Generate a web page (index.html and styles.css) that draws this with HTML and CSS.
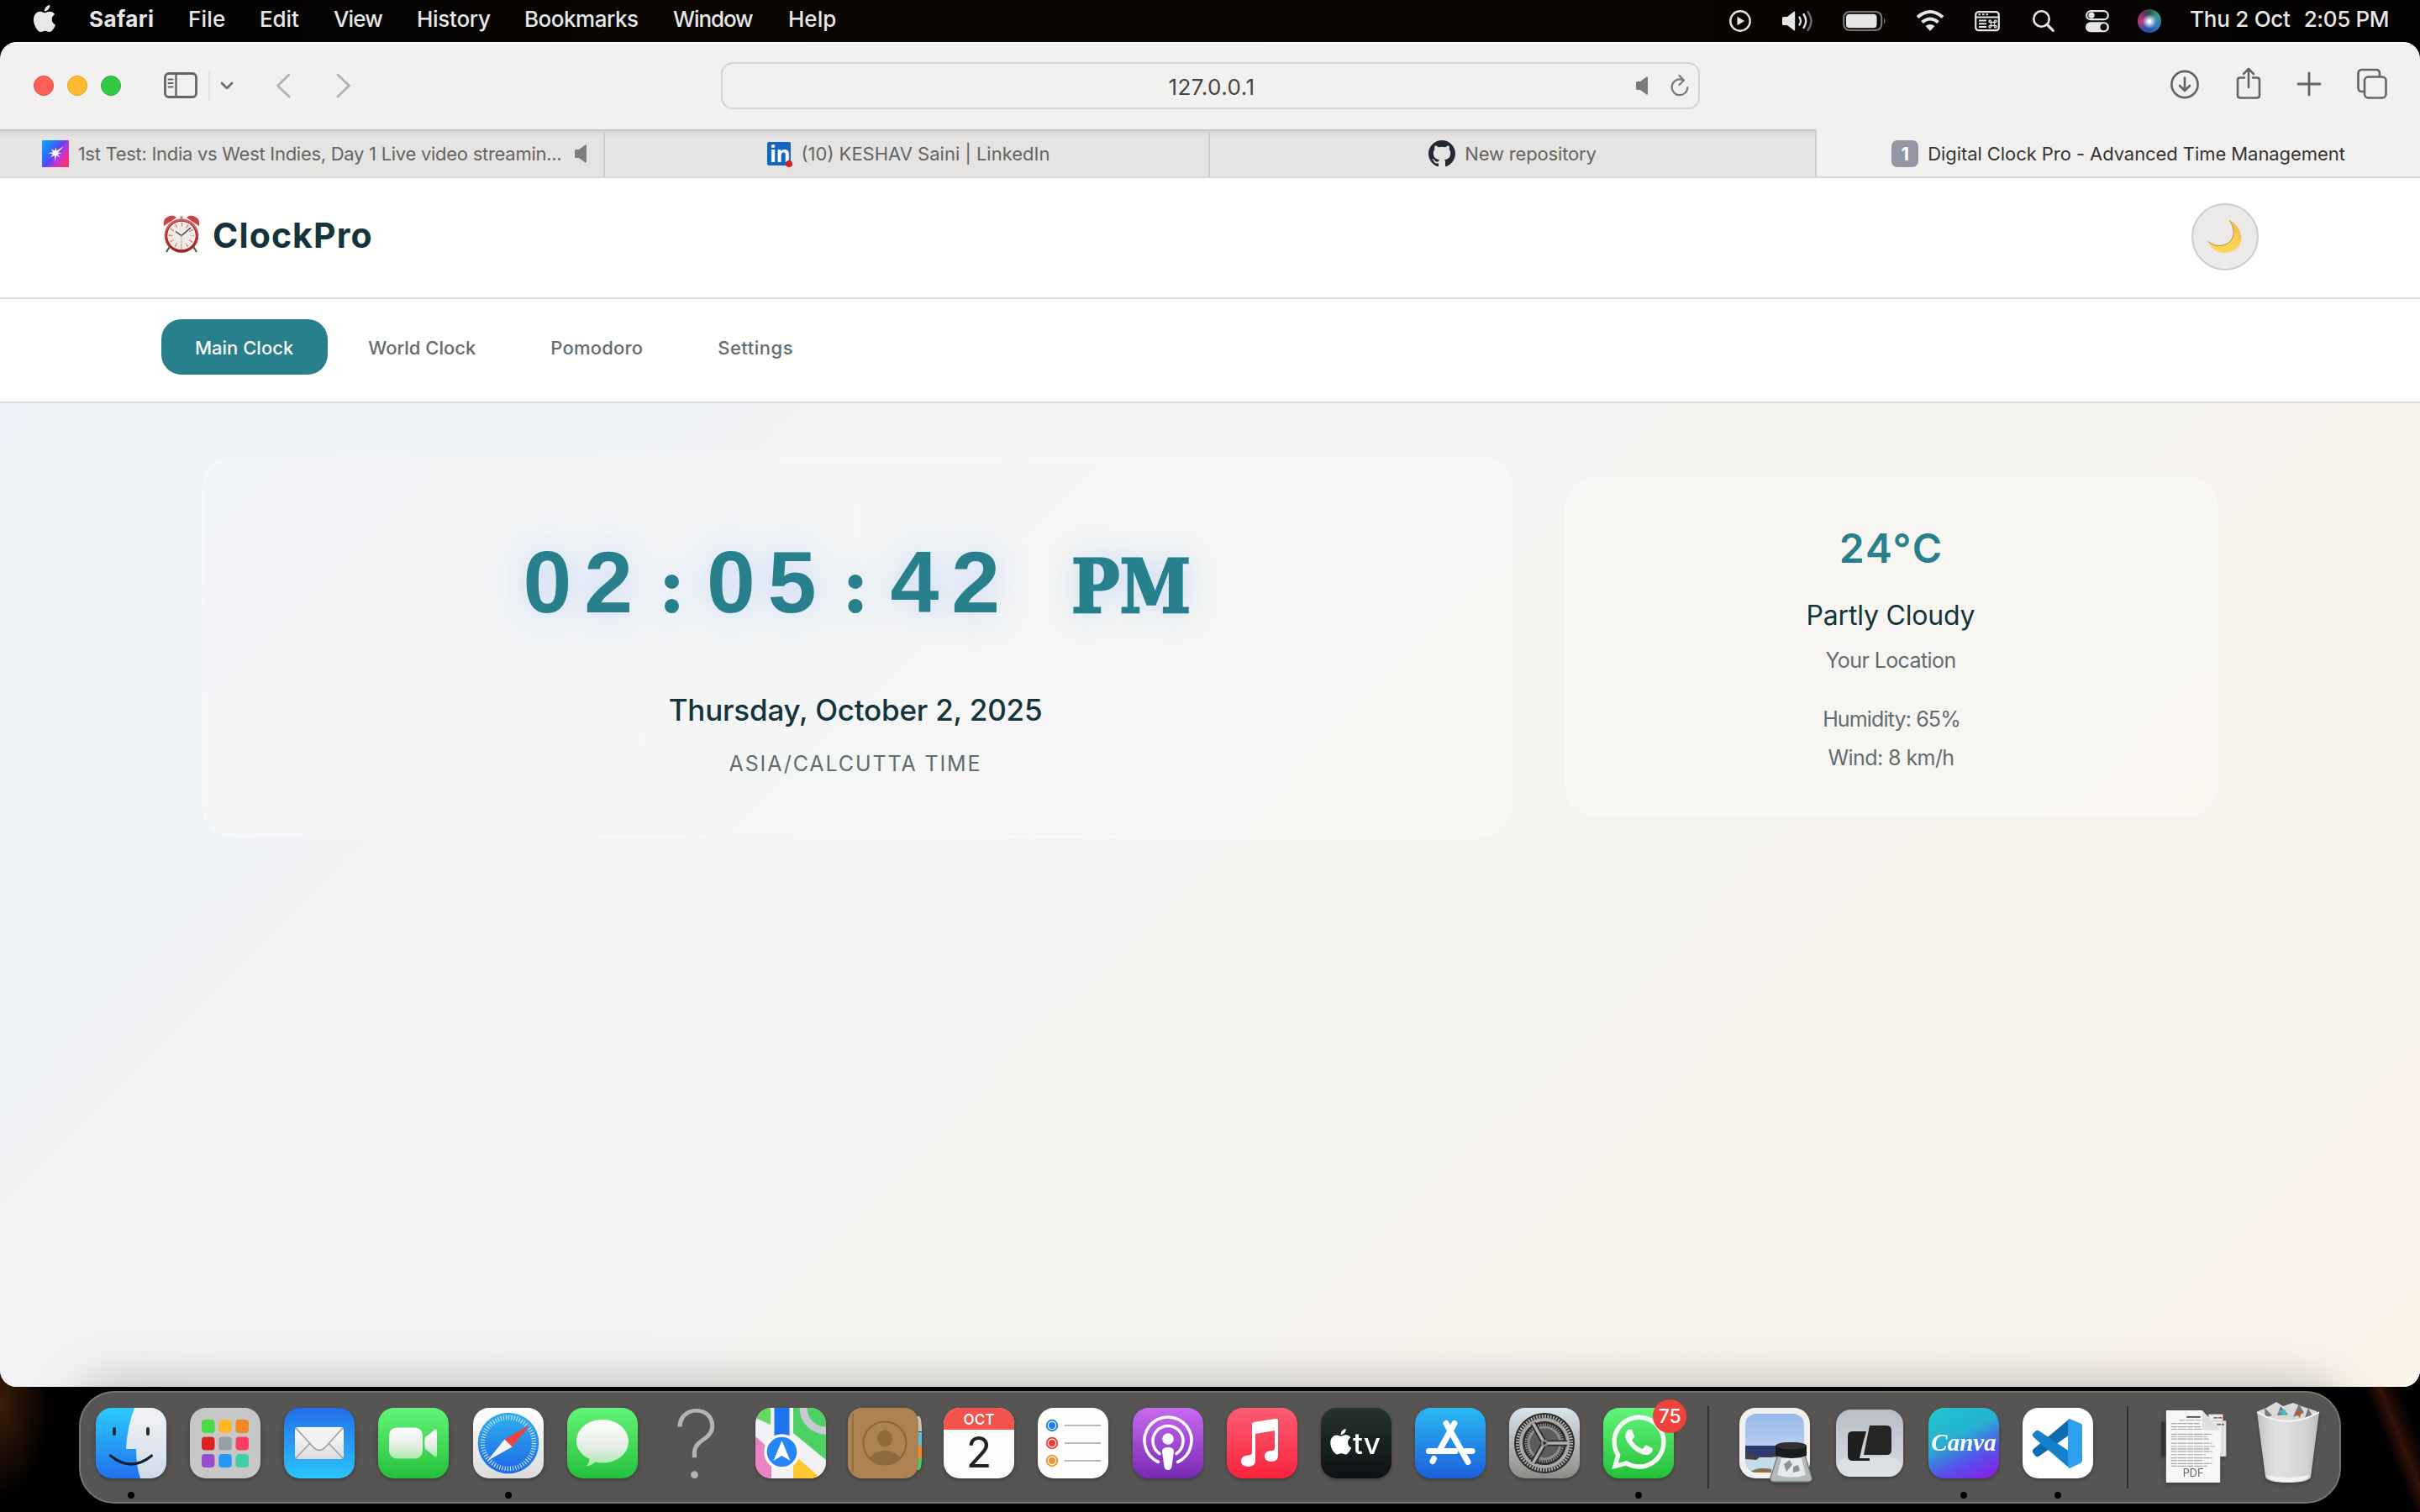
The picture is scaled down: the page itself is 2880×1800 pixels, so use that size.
FILE: index.html
```html
<!DOCTYPE html>
<html lang="en">
<head>
<meta charset="utf-8">
<title>Digital Clock Pro - Advanced Time Management</title>
<link rel="stylesheet" href="styles.css">
</head>
<body>
<div class="desktop">
  <header class="menubar">
    <svg class="apple" viewBox="0 0 24 24"><path fill="#e8e8e8" d="M12.152 6.896c-.948 0-2.415-1.078-3.96-1.04-2.04.027-3.91 1.183-4.961 3.014-2.117 3.675-.546 9.103 1.519 12.09 1.013 1.454 2.208 3.09 3.792 3.039 1.52-.065 2.09-.987 3.935-.987 1.831 0 2.35.987 3.96.948 1.637-.026 2.676-1.48 3.676-2.948 1.156-1.688 1.636-3.325 1.662-3.415-.039-.013-3.182-1.221-3.22-4.857-.026-3.04 2.48-4.494 2.597-4.559-1.429-2.09-3.623-2.324-4.39-2.376-2-.156-3.675 1.09-4.61 1.09zM15.53 3.83c.843-1.012 1.4-2.427 1.245-3.83-1.207.052-2.662.805-3.532 1.818-.78.896-1.454 2.338-1.273 3.714 1.338.104 2.715-.688 3.559-1.701"/></svg>
    <nav class="menus">
      <span class="app-name">Safari</span><span class="m-file">File</span><span class="m-edit">Edit</span><span class="m-view">View</span><span class="m-history">History</span><span class="m-bookmarks">Bookmarks</span><span class="m-window">Window</span><span class="m-help">Help</span>
    </nav>
    <div class="status">
      <svg width="28" height="28" viewBox="0 0 28 28"><circle cx="14" cy="14" r="11.7" fill="none" stroke="#e6e6e6" stroke-width="2.4"/><path d="M10.5 8.8v10.4l8.6-5.2z" fill="#e6e6e6"/></svg>
      <svg width="38" height="28" viewBox="0 0 38 28"><path d="M1 10.5q0-1.5 1.5-1.5H7l8-6.3q1.2-.8 1.2.8v21q0 1.6-1.2.8L7 19H2.5q-1.5 0-1.5-1.5z" fill="#e6e6e6"/><g fill="none" stroke="#e6e6e6" stroke-width="2.3" stroke-linecap="round"><path d="M21.5 9.5q3 4.500 0 9"/><path d="M26.5 6q5.500 8 0 16"/><path d="M31.5 3q8 11 0 22" stroke="#6d6d6d"/></g></svg>
      <svg width="52" height="28" viewBox="0 0 52 28"><rect x="1.2" y="3" width="45" height="22" rx="7" fill="none" stroke="#777" stroke-width="2.2"/><rect x="4" y="5.800" width="36.500" height="16.400" rx="4" fill="#e6e6e6"/><path d="M49 10q3 4 0 8z" fill="#777"/></svg>
      <svg width="34" height="28" viewBox="0 0 34 28"><g fill="none" stroke="#e6e6e6" stroke-width="4"><path d="M2 9.500q15-13 30 0"/><path d="M7.500 15.500q9.500-8 19 0"/></g><path d="M11.500 20q5.500-4 11 0L17 26z" fill="#e6e6e6"/></svg>
      <svg width="32" height="28" viewBox="0 0 32 28"><rect x="2.200" y="3.200" width="27.600" height="22" rx="3.500" fill="none" stroke="#e6e6e6" stroke-width="2.200"/><path d="M2 9.500h28" stroke="#e6e6e6" stroke-width="2"/><path d="M5.500 6.300h2.500m2 0h2.500m2 0h2.500" stroke="#e6e6e6" stroke-width="2"/><path d="M6 13.500h9M6 17.300h9M6 21h9" stroke="#e6e6e6" stroke-width="2"/><path d="M20.500 15.500h4v4h-4zM20.500 15.500h-1.300a1.300 1.300 0 1 1 1.300-1.300zM24.500 15.500v-1.300a1.300 1.300 0 1 1 1.300 1.300zM24.500 19.500h1.300a1.300 1.300 0 1 1-1.300 1.300zM20.500 19.500v1.300a1.300 1.300 0 1 1-1.300-1.300z" fill="none" stroke="#e6e6e6" stroke-width="1.400"/></svg>
      <svg width="28" height="28" viewBox="0 0 28 28"><circle cx="13.500" cy="11.500" r="9.200" fill="none" stroke="#e6e6e6" stroke-width="2.600"/><path d="M20.300 18.300l7 7" stroke="#e6e6e6" stroke-width="3.200" stroke-linecap="round"/></svg>
      <svg width="30" height="28" viewBox="0 0 30 28"><rect x="4.200" y="2.200" width="25.600" height="10" rx="5" fill="none" stroke="#e6e6e6" stroke-width="2.200"/><circle cx="10" cy="7.200" r="3.600" fill="#e6e6e6"/><rect x="3" y="15.200" width="28" height="12" rx="6" fill="#e6e6e6"/><circle cx="24.500" cy="21.200" r="4" fill="#0a0604"/></svg>
      <span class="siri"></span>
      <span class="date">Thu 2 Oct</span><span class="time">2:05 PM</span>
    </div>
  </header>

  <main class="window">
    <div class="toolbar">
      <div class="lights"><i class="red"></i><i class="amber"></i><i class="green"></i></div>
      <svg class="sidebar-icon" viewBox="0 0 40 32"><rect x="1.500" y="1.500" width="37" height="28" rx="4.500" fill="none" stroke="#666462" stroke-width="2.800"/><path d="M14.500 1.500v28" stroke="#666462" stroke-width="2.400"/><path d="M5.500 8.500h5M5.500 13h5M5.500 17.500h5" stroke="#666462" stroke-width="2" stroke-linecap="round"/></svg>
      <span class="rule"></span>
      <svg class="chev" viewBox="0 0 16 10"><path d="M2 2l6 6 6-6" fill="none" stroke="#706f6e" stroke-width="2.800" stroke-linecap="round" stroke-linejoin="round"/></svg>
      <svg class="back" viewBox="0 0 18 30"><path d="M16 2L2.500 15 16 28" fill="none" stroke="#b3b2b1" stroke-width="2.800" stroke-linecap="round" stroke-linejoin="round"/></svg>
      <svg class="fwd" viewBox="0 0 18 30"><path d="M2 2l13.500 13L2 28" fill="none" stroke="#b3b2b1" stroke-width="2.800" stroke-linecap="round" stroke-linejoin="round"/></svg>
      <div class="address">
        <span class="url">127.0.0.1</span>
        <div class="address-tools">
          <svg width="16" height="24" viewBox="0 0 16 24"><path d="M0 8.500q0-1.500 1.500-1.500H5l7.500-5.500q1.500-1 1.500 1v19q0 2-1.500 1L5 17H1.500Q0 17 0 15.500z" fill="#7a7978"/></svg>
          <svg width="24" height="28" viewBox="0 0 24 28"><path d="M15.800 7.200A9.400 9.400 0 1 0 21.400 16" fill="none" stroke="#7a7978" stroke-width="2.200" stroke-linecap="round"/><path d="M11.500 2l5.500 5.500-5.500 5.500" fill="none" stroke="#7a7978" stroke-width="2.200" stroke-linecap="round" stroke-linejoin="round"/></svg>
        </div>
      </div>
      <div class="actions">
        <svg width="36" height="40" viewBox="0 0 36 40"><g fill="none" stroke="#666462" stroke-width="2.600" stroke-linecap="round" stroke-linejoin="round"><circle cx="18" cy="20.500" r="15.600"/><path d="M18 12.500v15M12 22l6 6 6-6"/></g></svg>
        <svg width="30" height="40" viewBox="0 0 30 40"><g fill="none" stroke="#666462" stroke-width="2.600" stroke-linecap="round" stroke-linejoin="round"><path d="M10 12.500H5Q2 12.500 2 15.500v18q0 3 3 3h20q3 0 3-3v-18q0-3-3-3h-5"/><path d="M15 24V2M9 8l6-6 6 6"/></g></svg>
        <svg width="28" height="40" viewBox="0 0 28 40"><path d="M14 7v26M1 20h26" stroke="#666462" stroke-width="2.800" stroke-linecap="round"/></svg>
        <svg width="36" height="40" viewBox="0 0 36 40"><g fill="none" stroke="#666462" stroke-width="2.600" stroke-linejoin="round"><rect x="9" y="11.500" width="25.500" height="25" rx="4.500"/><path d="M9 29H6q-4.500 0-4.500-4.500v-17Q1.500 3 6 3h16.500Q27 3 27 7.500v4"/></g></svg>
      </div>
    </div>

    <div class="tabs">
      <div class="tab first">
        <svg width="32" height="32" viewBox="0 0 32 32"><defs><linearGradient id="hs" x1="0" y1="0" x2="1" y2=".7"><stop offset="0" stop-color="#14a9ff"/><stop offset=".3" stop-color="#1f7bff"/><stop offset=".55" stop-color="#5b45f5"/><stop offset=".75" stop-color="#c234d8"/><stop offset="1" stop-color="#ff2f6e"/></linearGradient></defs><rect width="32" height="32" fill="url(#hs)"/><path d="M26 7l-7 7.500 4.500.7-5 1.300 3 4-4.500-2.500L15.500 25 14.800 18l-4.800 2.500 3-4-6-1.500 6-.800-2-3.700 4 2L16.500 8l.8 4.500z" fill="#fff"/></svg>
        <span class="t1">1st Test: India vs West Indies, Day 1 Live video streamin...</span>
        <svg class="tab-sound" width="16" height="24" viewBox="0 0 16 24"><path d="M0 8.500q0-1.500 1.500-1.500H5l7.500-5.500q1.500-1 1.500 1v19q0 2-1.500 1L5 17H1.500Q0 17 0 15.500z" fill="#7f7e7d"/></svg>
      </div>
      <div class="tab second">
        <svg width="30" height="32" viewBox="0 0 30 32"><rect y="2" width="28" height="28" rx="2" fill="#1266c2"/><text x="3" y="26" class="in">in</text><circle cx="26" cy="28" r="4" fill="#d11f26"/></svg>
        <span class="t2">(10) KESHAV Saini | LinkedIn</span>
      </div>
      <div class="tab">
        <svg width="32" height="32" viewBox="0 0 16 16"><path fill="#22282f" d="M8 0C3.580 0 0 3.580 0 8c0 3.540 2.290 6.530 5.470 7.590.4.07.55-.17.55-.38 0-.19-.01-.82-.01-1.490-2.010.37-2.530-.49-2.690-.94-.09-.23-.48-.94-.82-1.130-.28-.15-.68-.52-.01-.53.63-.01 1.080.58 1.230.82.72 1.210 1.870.87 2.330.66.07-.52.28-.87.51-1.070-1.780-.2-3.640-.89-3.640-3.950 0-.87.31-1.590.82-2.150-.08-.2-.36-1.020.08-2.120 0 0 .67-.21 2.200.82.64-.18 1.320-.27 2-.27.68 0 1.360.09 2 .27 1.530-1.040 2.200-.82 2.200-.82.44 1.100.16 1.920.08 2.120.51.56.82 1.270.82 2.150 0 3.070-1.870 3.750-3.650 3.950.29.25.54.73.54 1.480 0 1.070-.01 1.930-.01 2.200 0 .21.15.46.55.38A8.013 8.013 0 0016 8c0-4.420-3.580-8-8-8z"/></svg>
        <span class="t3">New repository</span>
      </div>
      <div class="tab active">
        <b class="badge-one">1</b>
        <span class="t4">Digital Clock Pro - Advanced Time Management</span>
      </div>
    </div>

    <section class="page">
      <div class="site-header">
        <div class="logo">
          <svg width="44" height="46" viewBox="0 0 44 46"><defs><linearGradient id="rd" x1="0" y1="0" x2="0" y2="1"><stop offset="0" stop-color="#e2606a"/><stop offset="1" stop-color="#a51d22"/></linearGradient></defs><path d="M9 36l-5 8M35 36l5 8" stroke="#555" stroke-width="2.200"/><path d="M20.500 1h3v5h-3z" fill="#9a9a9a"/><path d="M1 13Q-1 5 6 2q6-3 10 1z" fill="#cf3f49"/><path d="M43 13Q45 5 38 2q-6-3-10 1z" fill="#cf3f49"/><circle cx="22" cy="24.500" r="20.300" fill="url(#rd)"/><circle cx="22" cy="24.500" r="17.300" fill="#eeecea" stroke="#8b2024" stroke-width="1"/><circle cx="22" cy="24.500" r="13" fill="none" stroke="#ef7468" stroke-width="5" stroke-dasharray="1.200 5.607" stroke-dashoffset=".6"/><path d="M15 19.500l7 5L33 15" fill="none" stroke="#444" stroke-width="1.400"/><path d="M22 24.500V39" stroke="#e2b98a" stroke-width="1.200"/></svg>
          <span>ClockPro</span>
        </div>
        <button class="theme"><svg width="42" height="42" viewBox="0 0 42 42"><defs><linearGradient id="mn" x1="0" y1="1" x2="1" y2="0"><stop offset="0" stop-color="#ffd84a"/><stop offset=".5" stop-color="#fbd35c"/><stop offset="1" stop-color="#f0b83a"/></linearGradient></defs><path d="M26 1C43 10 45 30 31 37.500 19 43.500 5 38 1 26.500 8 33 20 33.500 27 26.500 33 20 32.500 9 26 1z" fill="url(#mn)"/><path d="M1 26.500C8 33 20 33.500 27 26.500 33 20 32.500 9 26 1" fill="none" stroke="#b98a3a" stroke-width="1"/></svg></button>
      </div>
      <nav class="site-nav">
        <span class="pill on">Main Clock</span><span class="pill">World Clock</span><span class="pill p-pomodoro">Pomodoro</span><span class="pill p-settings">Settings</span>
      </nav>
      <div class="content">
        <article class="card clock-card">
          <div class="clock">02<span class="colon">:</span>05<span class="colon">:</span>42 <span class="meridiem">PM</span></div>
          <div class="full-date">Thursday, October 2, 2025</div>
          <div class="zone">ASIA/CALCUTTA TIME</div>
        </article>
        <article class="card weather-card">
          <div class="temp">24°C</div>
          <div class="cond">Partly Cloudy</div>
          <div class="place">Your Location</div>
          <div class="humid">Humidity: 65%</div>
          <div class="wind">Wind: 8 km/h</div>
        </article>
      </div>
    </section>
  </main>

  <footer class="dock">
    <div class="slot"><svg viewBox="0 0 84 84"><defs><clipPath id="sq"><rect width="84" height="84" rx="19"/></clipPath><linearGradient id="f1" x1="0" y1="0" x2="0" y2="1"><stop offset="0" stop-color="#2bccfd"/><stop offset="1" stop-color="#2270ee"/></linearGradient><linearGradient id="f2" x1="0" y1="0" x2="0" y2="1"><stop offset="0" stop-color="#f3f3f4"/><stop offset="1" stop-color="#cfdbea"/></linearGradient></defs><g clip-path="url(#sq)"><rect width="84" height="84" fill="url(#f1)"/><path d="M46 0Q37 24 36 49h12q0 20 5 35h31V0z" fill="url(#f2)"/></g><path d="M22 25v6M62 25v6" stroke="#22303c" stroke-width="4" stroke-linecap="round"/><path d="M17.500 57q24.500 20 49 0" fill="none" stroke="#16202a" stroke-width="3.200" stroke-linecap="round"/></svg><i class="dot"></i></div>
    <div class="slot"><svg viewBox="0 0 84 84"><rect width="84" height="84" rx="19" fill="#c7c7c7"/><rect x="14" y="14" width="15.500" height="16" rx="4" fill="#4bdc45"/><rect x="34.300" y="14" width="15.500" height="16" rx="4" fill="#fdb92b"/><rect x="54.500" y="14" width="15.500" height="16" rx="4" fill="#f38829"/><rect x="14" y="34.500" width="15.500" height="16" rx="4" fill="#dc2322"/><rect x="34.300" y="34.500" width="15.500" height="16" rx="4" fill="#95a0a5"/><rect x="54.500" y="34.500" width="15.500" height="16" rx="4" fill="#fc3d5f"/><rect x="14" y="55" width="15.500" height="16" rx="4" fill="#9b4bd0"/><rect x="34.300" y="55" width="15.500" height="16" rx="4" fill="#2599f5"/><rect x="54.500" y="55" width="15.500" height="16" rx="4" fill="#3fceaa"/></svg></div>
    <div class="slot"><svg viewBox="0 0 84 84"><defs><linearGradient id="ml" x1="0" y1="0" x2="0" y2="1"><stop offset="0" stop-color="#246fec"/><stop offset="1" stop-color="#2ac5fb"/></linearGradient><linearGradient id="wg" x1="0" y1="0" x2="0" y2="1"><stop offset="0" stop-color="#fff"/><stop offset="1" stop-color="#dcdcdc"/></linearGradient></defs><rect width="84" height="84" rx="19" fill="url(#ml)"/><rect x="13" y="23" width="58" height="38" rx="4" fill="url(#wg)"/><path d="M14 60l17-18M70 60L53 42" stroke="#a5a5a5" stroke-width="1.600"/><path d="M14 24l21 23q7 7 14 0l21-23" fill="#f2f2f2" stroke="#a0a0a0" stroke-width="1.600"/></svg></div>
    <div class="slot"><svg viewBox="0 0 84 84"><defs><linearGradient id="gn" x1="0" y1="0" x2="0" y2="1"><stop offset="0" stop-color="#62f478"/><stop offset="1" stop-color="#25c13b"/></linearGradient><linearGradient id="wgn" x1="0" y1="0" x2="0" y2="1"><stop offset="0" stop-color="#fff"/><stop offset=".6" stop-color="#e4ece3"/><stop offset="1" stop-color="#a6ecaa"/></linearGradient></defs><rect width="84" height="84" rx="19" fill="url(#gn)"/><rect x="13" y="23.500" width="40" height="37" rx="9" fill="url(#wgn)"/><path d="M56 35l11-8.500q3-2 3 1.500v28q0 3.500-3 1.500L56 49q-1.500-7 0-14z" fill="url(#wgn)"/></svg></div>
    <div class="slot"><svg viewBox="0 0 84 84"><defs><linearGradient id="sf" x1="0" y1="0" x2="0" y2="1"><stop offset="0" stop-color="#2eb1f0"/><stop offset="1" stop-color="#1f67e6"/></linearGradient></defs><rect width="84" height="84" rx="19" fill="url(#wg)"/><circle cx="42" cy="42" r="36.300" fill="url(#sf)"/><circle cx="42" cy="42" r="30.500" fill="none" stroke="#cfe6fb" stroke-width="5.500" stroke-dasharray="1.100 2.094"/><path d="M68 20L46.500 46.500l-9-9z" fill="#f0423f"/><path d="M37.500 37.500l9 9L17 63z" fill="#f4f4f4"/></svg><i class="dot"></i></div>
    <div class="slot"><svg viewBox="0 0 84 84"><rect width="84" height="84" rx="19" fill="url(#gn)"/><path d="M42 14c17 0 31 11 31 26S59 65.500 42 65.500q-5 0-9-1-4 4.500-10.500 5 4-4 4-8.500C17 56 11 49 11 40c0-15 14-26 31-26z" fill="url(#wgn)"/></svg></div>
    <div class="slot"><span class="question">?</span></div>
    <div class="slot"><svg viewBox="0 0 84 84"><g clip-path="url(#sq)"><rect width="84" height="84" fill="#f1f1f6"/><path d="M0 0h18v20L0 12z" fill="#63d962"/><path d="M45 0h39v62L45 30z" fill="#4cd264"/><circle cx="84" cy="0" r="27" fill="none" stroke="#c9c9d2" stroke-width="9"/><path d="M0 34l19 17v33H0z" fill="#ea82c6"/><path d="M45 55l33 29H45z" fill="#fdc830"/><path d="M22.500 0h18v50h-18z" fill="#1e74ef"/></g><circle cx="31.500" cy="52.500" r="19.500" fill="#2586fa" stroke="#fafafa" stroke-width="3.500"/><path d="M31.500 39l10 24-10-6-10 6z" fill="#fff"/></svg></div>
    <div class="slot"><svg class="contacts" viewBox="0 0 88 84"><path d="M80 10h5q3 2 3 18h-8z" fill="#c9c5bd"/><path d="M80 29h8v16h-8z" fill="#57bdea"/><path d="M80 45h8v15h-8z" fill="#f58b23"/><path d="M80 60h8q0 12-3 14h-5z" fill="#42cf5b"/><rect width="84" height="84" rx="17" fill="#ad8250"/><path d="M6 7v70" stroke="#8b6539" stroke-width="1.500"/><circle cx="44" cy="42" r="25.500" fill="none" stroke="#8a6539" stroke-width="2"/><ellipse cx="44" cy="36.500" rx="9" ry="10" fill="#8f6a3d"/><path d="M26 60q5-9 18-9t18 9q-7 7.500-18 7.500T26 60z" fill="#8f6a3d"/></svg></div>
    <div class="slot"><svg viewBox="0 0 84 84"><g clip-path="url(#sq)"><rect width="84" height="84" fill="#fbfbfa"/><rect width="84" height="26" fill="#f4544e"/></g><text x="42" y="20" class="month">OCT</text><text x="42" y="71" class="day">2</text></svg></div>
    <div class="slot"><svg viewBox="0 0 84 84"><rect width="84" height="84" rx="19" fill="#fdfdfc"/><path d="M32 21h43M32 42h43M32 63h43" stroke="#b9b8bd" stroke-width="2"/><g fill="none" stroke-width="1.800"><circle cx="17" cy="21" r="6.300" stroke="#1b7df3"/><circle cx="17" cy="42" r="6.300" stroke="#f23b36"/><circle cx="17" cy="63" r="6.300" stroke="#f0932a"/></g><circle cx="17" cy="21" r="4" fill="#1b7df3"/><circle cx="17" cy="42" r="4" fill="#f23b36"/><circle cx="17" cy="63" r="4" fill="#f0932a"/></svg></div>
    <div class="slot"><svg viewBox="0 0 84 84"><defs><linearGradient id="pc" x1="0" y1="0" x2="0" y2="1"><stop offset="0" stop-color="#c76af0"/><stop offset="1" stop-color="#7829b4"/></linearGradient></defs><rect width="84" height="84" rx="19" fill="url(#pc)"/><g fill="none" stroke="#fff" stroke-width="3.600" stroke-linecap="round"><path d="M30.500 64.500a28 28 0 1 1 23 0"/><path d="M32 54.500a18 18 0 1 1 20 0"/></g><circle cx="42" cy="37" r="6.800" fill="#fff"/><path d="M35 52q0-5 7-5t7 5l-2.500 18q-.8 4-4.500 4t-4.500-4z" fill="#fff"/></svg></div>
    <div class="slot"><svg viewBox="0 0 84 84"><defs><linearGradient id="mu" x1="0" y1="0" x2="0" y2="1"><stop offset="0" stop-color="#fb5c74"/><stop offset="1" stop-color="#fa233b"/></linearGradient></defs><rect width="84" height="84" rx="19" fill="url(#mu)"/><path d="M30 19.500q0-2 2-2.500l26-4q3-.5 3 2v42q0 7-8 7t-8-6.500 8-6.500q4 0 4-3V27l-23 4v31q0 8-8.500 8T17 63.500 25 56.500q5 0 5-3z" fill="#fff"/></svg></div>
    <div class="slot"><svg viewBox="0 0 84 84"><defs><linearGradient id="tvb" x1="0" y1="0" x2="0" y2="1"><stop offset="0" stop-color="#26332f"/><stop offset="1" stop-color="#0d1113"/></linearGradient></defs><rect width="84" height="84" rx="19" fill="url(#tvb)"/><path transform="translate(8.500 25) scale(1.270)" fill="#fff" d="M12.152 6.896c-.948 0-2.415-1.078-3.960-1.040-2.040.027-3.910 1.183-4.961 3.014-2.117 3.675-.546 9.103 1.519 12.090 1.013 1.454 2.208 3.090 3.792 3.039 1.520-.065 2.090-.987 3.935-.987 1.831 0 2.350.987 3.960.948 1.637-.026 2.676-1.480 3.676-2.948 1.156-1.688 1.636-3.325 1.662-3.415-.039-.013-3.182-1.221-3.220-4.857-.026-3.040 2.480-4.494 2.597-4.559-1.429-2.090-3.623-2.324-4.390-2.376-2-.156-3.675 1.090-4.610 1.090zM15.530 3.830c.843-1.012 1.400-2.427 1.245-3.830-1.207.052-2.662.805-3.532 1.818-.78.896-1.454 2.338-1.273 3.714 1.338.104 2.715-.688 3.559-1.701"/><text x="38" y="55" class="tv">tv</text></svg></div>
    <div class="slot"><svg viewBox="0 0 84 84"><defs><linearGradient id="as" x1="0" y1="0" x2="0" y2="1"><stop offset="0" stop-color="#2bb8f3"/><stop offset="1" stop-color="#1c5fdc"/></linearGradient></defs><rect width="84" height="84" rx="19" fill="url(#as)"/><g stroke="#fff" stroke-width="7" stroke-linecap="round"><path d="M47 18.500L30 49M37 18.500l26 46M22.500 60.500l-1.500 3"/><path d="M16.500 51.500H48M60 51.500h8"/></g></svg></div>
    <div class="slot"><svg viewBox="0 0 84 84"><defs><linearGradient id="st" x1="0" y1="0" x2="0" y2="1"><stop offset="0" stop-color="#d9e4ec"/><stop offset="1" stop-color="#8d8b87"/></linearGradient></defs><rect width="84" height="84" rx="19" fill="url(#st)"/><circle cx="42" cy="42" r="36" fill="#2c2c2c"/><circle cx="42" cy="42" r="32" fill="none" stroke="#b5b5b5" stroke-width="4" stroke-dasharray="1.700 1.650"/><circle cx="42" cy="42" r="28" fill="none" stroke="#a9a9a9" stroke-width="4"/><circle cx="42" cy="42" r="19" fill="#5d5c5a" stroke="#8d8d8d" stroke-width="3"/><circle cx="42" cy="42" r="22" fill="none" stroke="#8d8d8d" stroke-width="3" stroke-dasharray="1.500 1.300"/><path d="M42 42h27M42 42L28.500 18.500M42 42L28.500 65.500" stroke="#2c2c2c" stroke-width="7"/><path d="M42 42h27M42 42L28.500 18.500M42 42L28.500 65.500" stroke="#b0b0b0" stroke-width="3.500"/><circle cx="42" cy="42" r="4" fill="#8e8e8e"/><circle cx="42" cy="42" r="1.800" fill="#222"/></svg></div>
    <div class="slot"><svg viewBox="0 0 84 84"><rect width="84" height="84" rx="19" fill="url(#gn)"/><path transform="translate(10 8.500) scale(2.700)" fill="#f6f8f6" d="M17.472 14.382c-.297-.149-1.758-.867-2.030-.967-.273-.099-.471-.148-.67.15-.197.297-.767.966-.94 1.164-.173.199-.347.223-.644.075-.297-.15-1.255-.463-2.390-1.475-.883-.788-1.480-1.761-1.653-2.059-.173-.297-.018-.458.13-.606.134-.133.298-.347.446-.52.149-.174.198-.298.298-.497.099-.198.05-.371-.025-.52-.075-.149-.669-1.612-.916-2.207-.242-.579-.487-.5-.669-.51-.173-.008-.371-.01-.57-.01-.198 0-.52.074-.792.372-.272.297-1.040 1.016-1.040 2.479 0 1.462 1.065 2.875 1.213 3.074.149.198 2.096 3.200 5.077 4.487.709.306 1.262.489 1.694.625.712.227 1.360.195 1.871.118.571-.085 1.758-.719 2.006-1.413.248-.694.248-1.289.173-1.413-.074-.124-.272-.198-.57-.347m-5.421 7.403h-.004a9.870 9.870 0 01-5.031-1.378l-.361-.214-3.741.982.998-3.648-.235-.374a9.860 9.860 0 01-1.510-5.260c.001-5.450 4.436-9.884 9.888-9.884 2.640 0 5.122 1.030 6.988 2.898a9.825 9.825 0 012.893 6.994c-.003 5.450-4.437 9.884-9.885 9.884m8.413-18.297A11.815 11.815 0 0012.050 0C5.495 0 .16 5.335.157 11.892c0 2.096.547 4.142 1.588 5.945L.057 24l6.305-1.654a11.882 11.882 0 005.683 1.448h.005c6.554 0 11.890-5.335 11.893-11.893a11.821 11.821 0 00-3.480-8.413z"/></svg><b class="count">75</b><i class="dot"></i></div>
    <span class="divider"></span>
    <div class="slot"><svg class="tall" viewBox="0 0 88 90"><defs><clipPath id="ph"><rect x="7" y="7" width="70" height="70" rx="13"/></clipPath><linearGradient id="sky" x1="0" y1="0" x2="0" y2="1"><stop offset="0" stop-color="#8fb6ec"/><stop offset="1" stop-color="#b9cdf0"/></linearGradient></defs><rect width="84" height="84" rx="19" fill="#f1f0ef"/><g clip-path="url(#ph)"><path d="M0 0h84v46H0z" fill="url(#sky)"/><path d="M0 45h84v14H0z" fill="#2b3b74"/><path d="M0 58q12-5 22 0t24-2l38 4v24H0z" fill="#c4dcea"/><path d="M7 56q9-4 17 3l-4 3-13-1zM28 57q8-5 20-1v3z" fill="#453d42"/><path d="M12 77q8-7 26-4v6z" fill="#86704f"/></g><path d="M46 56h32l8 27q1 5-5 5H42q-6 0-5-5z" fill="#b4b9bb" stroke="#777c7f" stroke-width="1.300"/><path d="M50 60h24l5 20q-17 5-34 0z" fill="#e6eaec"/><path d="M53 67l7-5 3 6-7 8zM64 70l6-2 2 7-8 2z" fill="#88939c"/><path d="M43 46q0-5 18.500-5T80 46v11q-18 6-37 0z" fill="#1b1b1b"/><ellipse cx="61.500" cy="45.500" rx="17" ry="4" fill="#313131"/></svg></div>
    <div class="slot"><svg viewBox="0 0 84 84"><defs><linearGradient id="gy" x1="0" y1="0" x2="0" y2="1"><stop offset="0" stop-color="#b7bec4"/><stop offset="1" stop-color="#d7dce0"/></linearGradient></defs><rect x="2" y="2" width="80" height="80" rx="18" fill="url(#gy)"/><path d="M4 68q5-11 12-7 6-8 14-2h24q10-5 14 1 8 0 12 7-2 15-15 15H20Q5 82 4 68z" fill="#dde2e5" opacity=".8"/><path d="M21 28h17q-5 16-8 32h12v3H22q-6 0-6-6V34q0-6 5-6z" fill="#1f1f1f"/><path d="M42 21h20q6 0 6 6v23q0 6-6 6H35z" fill="#252525"/></svg></div>
    <div class="slot"><svg viewBox="0 0 84 84"><defs><linearGradient id="cv" x1=".2" y1="0" x2=".7" y2="1"><stop offset="0" stop-color="#20c4cb"/><stop offset=".4" stop-color="#25b0d2"/><stop offset=".75" stop-color="#5650ec"/><stop offset="1" stop-color="#7d2ae8"/></linearGradient></defs><rect width="84" height="84" rx="19" fill="url(#cv)"/><text x="42" y="51" class="canva">Canva</text></svg><i class="dot"></i></div>
    <div class="slot"><svg viewBox="0 0 84 84"><rect width="84" height="84" rx="19" fill="#fff"/><path d="M56 13v19L19 58q-2 1-4-1l-3-4q-1-2 1-4z" fill="#0f6cb2"/><path d="M56 72V52L19 27q-2-1-4 1l-3 3q-1 2 1 4z" fill="#1580cf"/><path d="M56 13l14 6q1 .8 1 3v41q0 2-2 3l-13 6q-2-1-2-3V16z" fill="#2ca0ee"/></svg><i class="dot"></i></div>
    <span class="divider"></span>
    <div class="slot"><svg class="paper" viewBox="0 0 80 90"><path d="M0 16h8v42H0z" fill="#343434"/><path d="M58 7h17v48H58zM62 15h17v43H62z" fill="#ececec" stroke="#c3c3c3"/><path d="M64 11h5M68 19h5" stroke="#4d8b55" stroke-width="2"/><path d="M70 11h4M74 19h3" stroke="#c8543d" stroke-width="2"/><path d="M6 2h44l22 24v64H6z" fill="#f7f7f7"/><path d="M31 10h17" stroke="#555" stroke-width="2"/><path d="M22 14h28M12 18h35M12 22h36M12 25h38M12 31h50M12 34h44M12 37h46M12 42h50M12 46h54M12 49h48M12 52h50M12 56h42M12 60h50M12 63h38M12 67h50M12 70h44" stroke="#a9a9a9" stroke-width="1.200" stroke-dasharray="7 1 11 1"/><path d="M50 2l22 24H53q-3 0-3-3z" fill="#dedede"/><text x="39" y="83" class="pdf">PDF</text></svg></div>
    <div class="slot"><svg class="trash" viewBox="0 0 76 98"><defs><linearGradient id="tr" x1="0" x2="1"><stop offset="0" stop-color="#c4c4c4"/><stop offset=".3" stop-color="#e3e1e0"/><stop offset=".8" stop-color="#d4d4d4"/><stop offset="1" stop-color="#b9b9b9"/></linearGradient></defs><path d="M2 12l10-4 12-7 8 5 12-4 10 4 18 6 2 8-8 12H10z" fill="#d9d9d9"/><path d="M10 8l9 9-8 3zM29 6l9 10-13 1zM51 3l6 11-13 5zM62 8l5 10-9 2z" fill="#77797b"/><path d="M26 12l9-2 1 8z" fill="#3fc1cf"/><path d="M46 13l8-2-2 9z" fill="#b95a33"/><path d="M1 13q37 20 74 0L65 90q-2 7-27 7t-27-7z" fill="url(#tr)"/><path d="M1 13q37 22 74 0" fill="none" stroke="#f6f6f6" stroke-width="2"/><path d="M13 88q25 6 50 0-2 8-25 8t-25-8z" fill="#f2f2f2"/></svg></div>
  </footer>
</div>
</body>
</html>
```
FILE: styles.css
```css
* { box-sizing: border-box; }
body { margin: 0; background: #000; font-family: Inter, "Liberation Sans", sans-serif; }
svg { display: block; flex: none; overflow: visible; }

.desktop {
  width: 2880px; height: 1800px; overflow: hidden;
  display: flex; flex-direction: column;
  background:
    radial-gradient(ellipse 60px 110px at 0 1670px, #3a1d08, transparent),
    linear-gradient(68deg, transparent 97.6%, #33140a 98.2%, #1c0a05 98.5%, transparent 99%) 0 1640px / 2880px 160px no-repeat,
    #020101;
}

/* menu bar */
.menubar { height: 50px; flex: none; display: flex; align-items: center; color: #e8e8e8; font-size: 26px; line-height: 45px; background: linear-gradient(90deg, #020202, #0c0703 40%, #0a0503 70%, #040202); }
.apple { width: 32px; height: 32px; margin: 0 0 6px 37px; }
.menus { display: flex; padding-bottom: 5px; margin-left: 37px; white-space: nowrap; font-weight: 450; }
.menus .app-name { width: 118px; font-weight: 700; letter-spacing: .43px; }
.m-file { width: 85px; letter-spacing: .19px; }
.m-edit { width: 88px; letter-spacing: -.1px; }
.m-view { width: 99px; letter-spacing: -.9px; }
.m-history { width: 128px; letter-spacing: -.28px; }
.m-bookmarks { width: 177px; letter-spacing: -.48px; }
.m-window { width: 137px; letter-spacing: -1.1px; }
.status { display: flex; align-items: center; white-space: nowrap; margin-left: auto; padding-right: 37px; height: 50px; }
.status svg { margin-right: 35px; }
.siri { width: 28px; height: 28px; border-radius: 50%; margin-right: 34px; background: radial-gradient(circle at 50% 52%, #fff 0 6%, #b9c7f0 18%, transparent 42%), conic-gradient(#27534f, #3c9a80 15%, #2c7cc0 35%, #2352b0 50%, #4a4aa0 62%, #b8387c 75%, #6a3358 90%, #27534f); }
.date, .time { font-weight: 450; padding-bottom: 5px; }
.date { margin-right: 16px; letter-spacing: -.26px; }
.time { letter-spacing: -.4px; }

/* browser window */
.window { height: 1601px; flex: none; display: flex; flex-direction: column; border-radius: 20px; overflow: hidden; background: #f2f1ef; }
.toolbar { height: 104px; flex: none; display: flex; align-items: center; box-shadow: inset 0 2px #fbfbfa; }
.lights { display: flex; gap: 16px; margin-left: 40px; }
.lights i { width: 24px; height: 24px; border-radius: 50%; border: 1px solid #e2463f; background: #ff5f57; }
.lights .amber { background: #febc2e; border-color: #dfa023; }
.lights .green { background: #34c748; border-color: #27a736; }
.sidebar-icon { width: 40px; height: 32px; margin-left: 51px; }
.rule { width: 2px; height: 36px; margin-left: 13px; background: #e2e1df; }
.chev { width: 16px; height: 10px; margin-left: 12px; }
.back { width: 18px; height: 30px; margin-left: 50px; }
.fwd { width: 18px; height: 30px; margin-left: 54px; }
.address { width: 1165px; height: 56px; margin-left: 440px; border: 2px solid #d5d4d2; border-radius: 14px; display: grid; grid-template-columns: 1fr auto 1fr; align-items: center; font-size: 26px; color: #454443; }
.url { grid-column: 2; padding: 3px 0 0 3px; letter-spacing: .46px; }
.address-tools { justify-self: end; display: flex; align-items: center; gap: 24px; margin-right: 10px; }
.actions { display: flex; gap: 43px; margin-left: auto; margin-right: 39px; align-items: center; padding-bottom: 4px; }

.tabs { height: 58px; flex: none; display: grid; grid-template-columns: 720px 720px 722px 718px; font-size: 22px; color: #656463; font-weight: 430; white-space: nowrap; }
.tab { display: flex; align-items: center; justify-content: center; gap: 11px; padding-top: 1px; background: linear-gradient(#c3c2c0 0 1px, #d3d2d0 2px, #dfdedc 5px, #e5e4e2 9px); border-right: 2px solid #cfcecc; border-bottom: 2px solid #dbdad8; }
.tab.first { padding-left: 32px; }
.tab.second { padding-left: 4px; }
.tab span { padding-top: 1px; }
.tab.active { background: #f2f1ef; color: #353433; border-right: 0; }
.tab-sound { margin-left: 5px; }
.t1 { letter-spacing: -.28px; }
.t2 { letter-spacing: 0; }
.t3 { letter-spacing: -.17px; }
.t4 { letter-spacing: -.07px; }
.badge-one { width: 32px; height: 32px; border-radius: 7px; background: #9596a3; color: #fff; font-size: 22px; line-height: 32px; text-align: center; font-weight: 700; }
.in { font: 700 26px "Open Sans", sans-serif; fill: #fff; letter-spacing: -.5px; }

/* clock site */
.page { flex: 1; display: flex; flex-direction: column; color: #13343b; background: linear-gradient(135deg, #edf2f9, #f4f4f2 50%, #fbf4e9); }
.site-header, .site-nav { background: #fffffd; border-bottom: 2px solid #dfdbd6; flex: none; display: flex; }
.site-header { height: 144px; padding: 30px 192px 32px; justify-content: space-between; align-items: center; }
.logo { display: flex; align-items: center; gap: 15px; font-size: 41px; font-weight: 700; letter-spacing: 1.1px; padding: 0 0 5px 2px; }
.logo svg { margin-bottom: 2px; }
.theme { width: 80px; height: 80px; padding: 0; border-radius: 50%; border: 2px solid #cfcec9; background: #ebeae8; display: flex; align-items: center; justify-content: center; }
.site-nav { height: 124px; padding: 24px 192px 32px; gap: 8px; }
.pill { height: 66px; padding: 2px 41px 0 40px; border-radius: 24px; font-size: 22px; font-weight: 500; line-height: 64px; color: #626c71; white-space: nowrap; }
.pill.on { background: #27808b; color: #fcfcf9; }
.p-pomodoro { letter-spacing: .2px; }
.p-settings { letter-spacing: .5px; }
.content { flex: 1; display: grid; grid-template-columns: 1560px 778px; gap: 62px; align-content: start; align-items: center; justify-content: start; padding: 63px 0 0 240px; }
.card { border: 2px solid rgba(255,255,255,.22); background: rgba(255,255,255,.2); border-radius: 40px; text-align: center; white-space: nowrap; }
.clock-card { height: 454px; padding-top: 81px; }
.weather-card { height: 404px; padding-top: 53px; }
.clock { height: 134px; padding-left: 3px; font: 700 104px/134px "Liberation Sans", sans-serif; letter-spacing: 15px; word-spacing: 28.9px; color: #27808b; text-shadow: 0 0 40px rgba(59,130,246,.3); }
.colon { display: inline-block; width: 72.8px; padding-right: 10px; text-align: center; font-family: "DejaVu Serif", serif; font-size: 92px; line-height: 100px; letter-spacing: 0; }
.meridiem { display: inline-block; width: 145.6px; margin-left: -3px; text-align: left; font-family: "DejaVu Serif", serif; font-size: 88px; letter-spacing: 0; transform: scaleX(.87); transform-origin: 0 50%; line-height: 100px; -webkit-text-stroke: 2.5px #27808b; }
.full-date { font-size: 35px; line-height: 56px; margin-top: 57px; padding-right: 4px; font-weight: 500; letter-spacing: -.21px; }
.zone { font-size: 25px; line-height: 40px; margin-top: 16px; padding-right: 4px; color: #626c71; letter-spacing: 1.89px; }
.temp { font-size: 48px; line-height: 60px; font-weight: 600; color: #27808b; letter-spacing: 2.02px; }
.cond { font-size: 32px; line-height: 44px; margin-top: 28px; padding-right: 2px; letter-spacing: -.19px; }
.place, .humid, .wind { font-size: 25px; line-height: 36px; color: #626c71; }
.place { margin-top: 13px; letter-spacing: -.6px; padding-right: 2px; }
.humid { margin-top: 34px; letter-spacing: -.86px; }
.wind { margin-top: 10px; letter-spacing: -.56px; padding-right: 1px; }

/* dock */
.dock { width: 2692px; height: 134px; flex: none; margin: 5px 0 0 94px; padding-left: 4px; display: flex; border: 2px solid #757472; border-radius: 42px; background: #575553; box-shadow: 0 -6px 60px 6px rgba(0,0,0,.22); position: relative; }
.slot { width: 112.15px; height: 130px; flex: none; display: flex; justify-content: center; padding-top: 18px; position: relative; }
.slot > svg { width: 84px; height: 84px; filter: drop-shadow(0 2px 2px rgba(0,0,0,.3)); }
.slot > .contacts { width: 88px; }
.slot > .tall { width: 88px; height: 90px; margin-left: 4px; }
.slot > .paper { width: 78px; height: 90px; }
.slot > .trash { width: 76px; height: 98px; margin-top: -8px; }
.dot { position: absolute; width: 8px; height: 8px; border-radius: 50%; background: #000; bottom: 4px; left: 52px; }
.question { font-size: 112px; line-height: 84px; font-weight: 250; color: #b5b4b3; }
.count { position: absolute; left: 73px; top: 8px; width: 40px; height: 40px; border-radius: 50%; background: #f2403c; color: #fff; font-size: 23px; line-height: 40px; font-weight: 450; text-align: center; }
.divider { width: 2px; height: 98px; margin: 16px 22px 0 26px; background: #2f2e2d; flex: none; }
.month { font: 600 17px Inter, sans-serif; fill: #fff; text-anchor: middle; }
.day { font: 400 50px Inter, sans-serif; fill: #222; text-anchor: middle; }
.tv { font: 500 35px Inter, sans-serif; fill: #fff; }
.canva { font: italic 700 29px "Liberation Serif", serif; fill: #fff; text-anchor: middle; }
.pdf { font: 400 13px Inter, sans-serif; fill: #666; text-anchor: middle; }
```
